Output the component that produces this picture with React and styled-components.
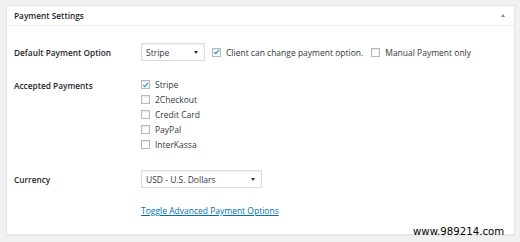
import React from "react";
import styled, { createGlobalStyle } from "styled-components";

const Global = createGlobalStyle`
  html, body { margin: 0; padding: 0; background: #f1f1f1; }
  body { font-family: "Open Sans", "Liberation Sans", sans-serif; color: #32373c; }
`;

const Page = styled.div`
  position: relative;
  width: 520px;
  height: 242px;
  padding: 5px 5px 0 6px;
  box-sizing: border-box;
`;

const Panel = styled.div`
  background: #fff;
  border: 1px solid #e5e5e5;
  box-shadow: 0 1px 1px rgba(0,0,0,0.04);
  height: 230px;
  box-sizing: border-box;
`;

const Header = styled.div`
  display: flex;
  align-items: center;
  justify-content: space-between;
  height: 20px;
  padding: 0 9px 1px 7px;
  box-sizing: border-box;
  border-bottom: 1px solid #eeeeee;
`;

const Title = styled.h2`
  margin: 0;
  font-size: 8.3px;
  font-weight: 600;
  color: #23282d;
`;

const Arrow = styled.span`
  width: 0;
  height: 0;
  border-left: 2.5px solid transparent;
  border-right: 2.5px solid transparent;
  border-bottom: 3px solid #888;
`;

const Body = styled.div`
  padding: 17px 0 0 7px;
`;

const Row = styled.div`
  display: grid;
  grid-template-columns: 127px 1fr;
  align-items: ${p => p.$top ? "start" : "center"};
  justify-items: start;
  margin-bottom: ${p => p.$mb || 0}px;
`;

const Label = styled.div`
  font-size: 8.3px;
  font-weight: 600;
  color: #23282d;
  padding-top: ${p => p.$pt || 0}px;
`;

const Controls = styled.div`
  display: flex;
  align-items: center;
`;

const Select = styled.div`
  display: flex;
  align-items: center;
  justify-content: space-between;
  box-sizing: border-box;
  width: ${p => p.$w}px;
  height: 18px;
  border: 1px solid #ddd;
  box-shadow: inset 0 1px 2px rgba(0,0,0,0.07);
  padding: 0 6px 0 4px;
  font-size: 8.5px;
  color: #32373c;
`;

const Caret = styled.span`
  width: 0;
  height: 0;
  border-left: 2px solid transparent;
  border-right: 2px solid transparent;
  border-top: 3.5px solid #333;
`;

const Box = styled.span`
  display: inline-flex;
  align-items: center;
  justify-content: center;
  width: 9px;
  height: 9px;
  box-sizing: border-box;
  border: 1px solid #b4b9be;
  box-shadow: inset 0 1px 2px rgba(0,0,0,0.1);
  background: #fff;
  margin-right: 5px;
`;

const Check = ({ on }) => (
  <Box>
    {on && (
      <svg width="8" height="8" viewBox="0 0 8 8">
        <path d="M1.3 4.2 L3.2 6 L6.8 1.6" fill="none" stroke="#1e8cbe" strokeWidth="1.3" />
      </svg>
    )}
  </Box>
);

const CheckLabel = styled.label`
  display: flex;
  align-items: center;
  font-size: 8.5px;
  color: #32373c;
  margin-left: ${p => p.$ml || 0}px;
  height: 15px;
`;

const List = styled.div`
  display: flex;
  flex-direction: column;
`;

const Link = styled.a`
  font-size: 8.5px;
  color: #0073aa;
  text-decoration: underline;
`;

const Watermark = styled.div`
  position: absolute;
  left: 413px;
  top: 226px;
  font-family: "DejaVu Sans", Verdana, sans-serif;
  font-size: 10.2px;
  color: #000;
`;

export default function App() {
  return (
    <>
      <Global />
      <Page>
        <Panel>
          <Header>
            <Title>Payment Settings</Title>
            <Arrow />
          </Header>
          <Body>
            <Row $mb={16}>
              <Label>Default Payment Option</Label>
              <Controls>
                <Select $w={64}>Stripe<Caret /></Select>
                <CheckLabel $ml={7}><Check on />Client can change payment option.</CheckLabel>
                <CheckLabel $ml={8}><Check />Manual Payment only</CheckLabel>
              </Controls>
            </Row>
            <Row $top $mb={18}>
              <Label $pt={3}>Accepted Payments</Label>
              <List>
                <CheckLabel><Check on />Stripe</CheckLabel>
                <CheckLabel><Check />2Checkout</CheckLabel>
                <CheckLabel><Check />Credit Card</CheckLabel>
                <CheckLabel><Check />PayPal</CheckLabel>
                <CheckLabel><Check />InterKassa</CheckLabel>
              </List>
            </Row>
            <Row $mb={17}>
              <Label>Currency</Label>
              <Select $w={121}>USD - U.S. Dollars<Caret /></Select>
            </Row>
            <Row>
              <span />
              <Link href="#">Toggle Advanced Payment Options</Link>
            </Row>
          </Body>
        </Panel>
        <Watermark>www.989214.com</Watermark>
      </Page>
    </>
  );
}
